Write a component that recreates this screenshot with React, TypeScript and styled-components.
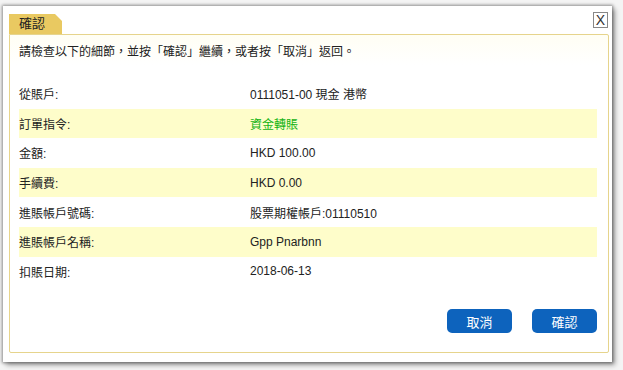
import React from 'react';
import styled, { createGlobalStyle } from 'styled-components';

const GlobalStyle = createGlobalStyle`
  html, body {
    margin: 0;
    padding: 0;
    background: #f4f4f4;
    font-family: "Liberation Sans", "Noto Sans CJK TC", Arial, sans-serif;
  }
`;

const Page = styled.div`
  width: 623px;
  height: 370px;
  padding: 6px 0 0 3px;
  box-sizing: border-box;
`;

const Dialog = styled.div`
  width: 609px;
  height: 356px;
  background: #ffffff;
  box-shadow: 0 0 3px 1px rgba(0, 0, 0, 0.4), 3px 3px 5px rgba(0, 0, 0, 0.35);
  display: flex;
  flex-direction: column;
  padding: 0 3px 9px 6px;
  box-sizing: border-box;
`;

const Header = styled.div`
  height: 28px;
  display: flex;
  align-items: flex-end;
  justify-content: space-between;
  position: relative;
`;

const Tab = styled.div`
  width: 53px;
  height: 20px;
  background: #e9c961;
  color: #222;
  font-size: 13px;
  line-height: 20px;
  padding-left: 10px;
  box-sizing: border-box;
  clip-path: polygon(0 0, 46px 0, 53px 7px, 53px 100%, 0 100%);
`;

const CloseButton = styled.div`
  position: absolute;
  right: 1px;
  top: 6px;
  width: 15px;
  height: 16px;
  border: 1px solid #888;
  box-sizing: border-box;
  font-size: 14px;
  line-height: 14px;
  text-align: center;
  color: #333;
`;

const Panel = styled.div`
  flex: 1;
  border: 1px solid #e6d48c;
  border-radius: 0 2px 2px 2px;
  background: linear-gradient(#fffef4, #ffffff 30px);
  padding: 0 11px 0 9px;
  display: flex;
  flex-direction: column;
`;

const Intro = styled.div`
  font-size: 12px;
  color: #222;
  height: 30px;
  line-height: 34px;
  margin-bottom: 14px;
`;

const Row = styled.div<{ $alt?: boolean }>`
  display: grid;
  grid-template-columns: 231px 1fr;
  height: 29.6px;
  align-items: center;
  background: ${(p) => (p.$alt ? '#fefdca' : 'transparent')};
  font-size: 12px;
  color: #222;
`;

const Value = styled.span<{ $green?: boolean }>`
  color: ${(p) => (p.$green ? '#13b313' : '#222')};
`;

const Actions = styled.div`
  margin-top: auto;
  margin-bottom: 19px;
  display: flex;
  justify-content: flex-end;
  gap: 20px;
`;

const Button = styled.button`
  width: 65px;
  height: 24px;
  border: none;
  border-radius: 5px;
  background: #0d63bd;
  color: #fff;
  font-family: inherit;
  font-size: 13px;
  cursor: pointer;
`;

const rows = [
  { label: '從賬戶:', value: '0111051-00 現金 港幣' },
  { label: '訂單指令:', value: '資金轉賬', green: true },
  { label: '金額:', value: 'HKD 100.00' },
  { label: '手續費:', value: 'HKD 0.00' },
  { label: '進賬帳戶號碼:', value: '股票期權帳戶:01110510' },
  { label: '進賬帳戶名稱:', value: 'Gpp Pnarbnn' },
  { label: '扣賬日期:', value: '2018-06-13' },
];

export default function App() {
  return (
    <>
      <GlobalStyle />
      <Page>
        <Dialog>
          <Header>
            <Tab>確認</Tab>
            <CloseButton>X</CloseButton>
          </Header>
          <Panel>
            <Intro>請檢查以下的細節，並按「確認」繼續，或者按「取消」返回。</Intro>
            {rows.map((r, i) => (
              <Row key={r.label} $alt={i % 2 === 1}>
                <span>{r.label}</span>
                <Value $green={r.green}>{r.value}</Value>
              </Row>
            ))}
            <Actions>
              <Button>取消</Button>
              <Button>確認</Button>
            </Actions>
          </Panel>
        </Dialog>
      </Page>
    </>
  );
}
